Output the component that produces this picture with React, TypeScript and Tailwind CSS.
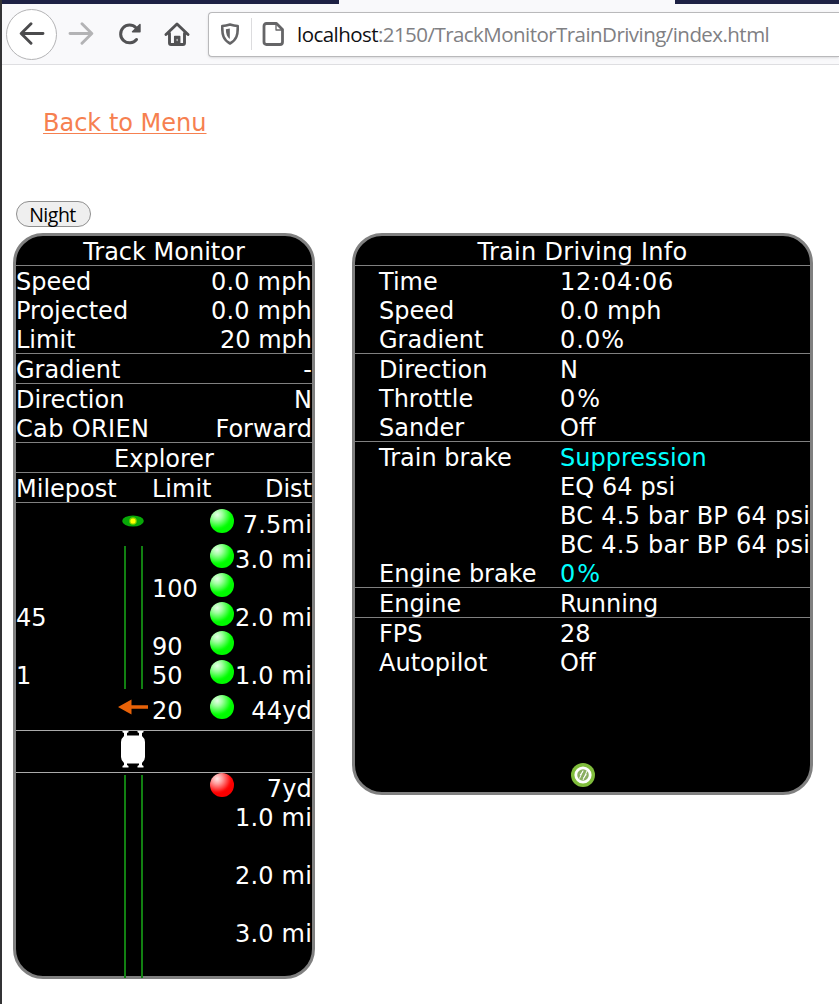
import React from "react";

type Signal = "green" | "red";

function Ball({ color }: { color: Signal }) {
  return (
    <svg className="block h-6 w-6" viewBox="0 0 24 24">
      <defs>
        <radialGradient id={"ball-" + color} cx="0.3" cy="0.24" r="0.62">
          <stop offset="0" stopColor={color === "green" ? "#e6ffe6" : "#ffe6e6"} />
          <stop offset="0.35" stopColor={color === "green" ? "#a0ffa0" : "#ff9c9c"} />
          <stop offset="0.9" stopColor={color === "green" ? "#0aff0a" : "#ff0a0a"} />
          <stop offset="1" stopColor={color === "green" ? "#00fb00" : "#fb0000"} />
        </radialGradient>
      </defs>
      <circle cx="12" cy="12" r="12" fill={"url(#ball-" + color + ")"} />
    </svg>
  );
}

function Title({ children, className }: { children: React.ReactNode; className?: string }) {
  return <div className={"h-[30px] border-b border-[#808080] text-center " + (className || "")}>{children}</div>;
}

function Pair({ label, value, line, labelClass, valueClass }: { label: string; value: string; line?: boolean; labelClass?: string; valueClass?: string }) {
  return (
    <div className={line ? "flex h-[30px] justify-between border-b border-[#808080]" : "flex h-[29px] justify-between"}>
      <span className={labelClass}>{label}</span>
      <span className={valueClass}>{value}</span>
    </div>
  );
}

function TrackRow({ post, limit, signal, dist, height }: { post?: string; limit?: string; signal?: Signal; dist?: string; height?: string }) {
  return (
    <div className={"grid grid-cols-[136px_58px_24px_78px] " + (height || "h-[29px]")}>
      <span>{post}</span>
      <span>{limit}</span>
      <span>{signal && <Ball color={signal} />}</span>
      <span className="-ml-1 flex justify-end whitespace-nowrap tracking-[0.2px]">{dist}</span>
    </div>
  );
}

function Info({ label, value, line, valueClass }: { label?: string; value: string; line?: boolean; valueClass?: string }) {
  return (
    <div className={"grid grid-cols-[181px_250px] pl-6 " + (line ? "h-[30px] border-b border-[#808080]" : "h-[29px]")}>
      <span>{label}</span>
      <span className={"whitespace-nowrap " + (valueClass || "")}>{value}</span>
    </div>
  );
}

function Rails({ size }: { size: string }) {
  return <div className={"w-[19px] border-x-2 border-[#128012] " + size} />;
}

function Browser() {
  return (
    <header className="h-[65px] border-b border-[#dedee1] bg-[#f9f9fb]">
      <div className="flex h-1 justify-between">
        <div className="w-[337px] bg-[#1d2144]" />
        <div className="w-[164px] bg-[#1d2144]" />
      </div>
      <div className="flex h-[60px] items-center">
        <div className="ml-1 flex h-[51px] w-[51px] items-center justify-center rounded-full border border-[#b4b4b6] bg-white">
          <svg width="26" height="24" viewBox="0 0 26 24" fill="none" stroke="#4b4b4d" strokeWidth="2.9" strokeLinecap="round" strokeLinejoin="round">
            <path d="M24 11.500H2.500M12 1.700L2.200 11.500l9.800 9.800" />
          </svg>
        </div>
        <svg className="ml-[11px]" width="26" height="24" viewBox="0 0 26 24" fill="none" stroke="#b3b3b5" strokeWidth="2.9" strokeLinecap="round" strokeLinejoin="round">
          <path d="M2 11.500h21.500M14 1.700l9.800 9.800-9.800 9.800" />
        </svg>
        <svg className="ml-[23px]" width="26" height="24" viewBox="0 0 26 24" fill="none" stroke="#525254" strokeWidth="3" strokeLinecap="round">
          <path d="M19.500 17.500A8.900 8.900 0 1 1 19 5.800" />
          <path d="M23 2.500v7.300H15.500z" fill="#525254" strokeWidth="1.400" strokeLinejoin="round" />
        </svg>
        <svg className="ml-[21px]" width="26" height="26" viewBox="0 0 26 26" fill="none" stroke="#525254" strokeWidth="2.900" strokeLinecap="round" strokeLinejoin="round">
          <path d="M2 13.500L13 3l11 10.500M5.500 12.500v9.500q0 1.500 1.500 1.500h12q1.500 0 1.500-1.500v-9.500" />
          <path d="M10.700 23V15.500h5V23" fill="#525254" strokeWidth="1.500" />
          <path d="M13.200 18.500v1" stroke="#b9b9bb" strokeWidth="1.500" />
        </svg>
        <div className="ml-[18px] flex h-[45px] flex-1 items-center rounded-l-sm border border-r-0 border-[#b9b9bb] bg-white shadow-sm">
          <svg className="ml-3" width="18" height="22" viewBox="0 0 18 22">
            <path d="M9 1.500Q13 2.700 16.700 3C17 11.500 15.700 17 9 20.500C2.300 17 1 11.500 1.300 3Q5 2.700 9 1.500z" fill="none" stroke="#656567" strokeWidth="2.600" strokeLinejoin="round" />
            <path d="M8.800 5.500v10.500C6 14 4.900 11 4.900 6.200z" fill="#656567" />
          </svg>
          <div className="ml-3 h-8 w-px bg-[#dcdcde]" />
          <svg className="ml-[10px]" width="22" height="24" viewBox="0 0 22 24" fill="none" stroke="#656567" strokeLinejoin="round">
            <path d="M4.500 1.500h10l6 6v12.500q0 2.500-2.500 2.500H4.500Q2 22.500 2 20V4q0-2.500 2.500-2.500z" strokeWidth="2.800" />
            <path d="M14 2v6h6" strokeWidth="1.300" />
          </svg>
          <span className="ml-[13px] whitespace-nowrap font-['Open_Sans','Noto_Sans',sans-serif] text-[20.500px] tracking-[-0.550px] text-[#808083]">
            <span className="text-[#101014]">localhost</span>:2150/TrackMonitorTrainDriving/index.html
          </span>
        </div>
      </div>
    </header>
  );
}

export default function App() {
  return (
    <div className="h-[1004px] w-[839px] overflow-hidden border-l-2 border-[#333335] bg-white font-['Verdana','DejaVu_Sans',sans-serif] text-[24px] leading-[33px]">
      <Browser />
      <a href="#menu" className="mt-[42px] ml-[41px] block h-[94px] w-fit text-[#f68050] underline decoration-1 underline-offset-[2px]">
        Back to Menu
      </a>
      <button className="ml-3.5 block h-[26px] w-[75px] rounded-full border border-[#8f8f8f] bg-[#efefef] pr-0.5 font-['Open_Sans','Noto_Sans',sans-serif] text-[19.5px] leading-[25px] tracking-[-0.500px] text-black">
        Night
      </button>
      <main className="mt-1.5 ml-[11px] flex items-start gap-[37px] text-white">
        <section className="h-[746px] w-[302px] rounded-[30px] border-[3px] border-[#808080] bg-black">
          <Title>Track Monitor</Title>
          <Pair label="Speed" value="0.0 mph" valueClass="tracking-[0.2px]" />
          <Pair label="Projected" value="0.0 mph" valueClass="tracking-[0.2px]" />
          <Pair label="Limit" value="20 mph" line />
          <Pair label="Gradient" value="-" line />
          <Pair label="Direction" value="N" />
          <Pair label="Cab ORIEN" value="Forward" line labelClass="tracking-[0.35px]" />
          <Title>Explorer</Title>
          <div className="grid h-[30px] grid-cols-[136px_82px_78px] border-b border-[#808080]">
            <span>Milepost</span>
            <span>Limit</span>
            <span className="flex justify-end">Dist</span>
          </div>
          <div className="relative h-[228px] border-b border-[#aaaaaa] pt-1.5">
            <TrackRow signal="green" dist="7.5mi" height="h-[35px]" />
            <TrackRow signal="green" dist="3.0 mi" />
            <TrackRow limit="100" signal="green" />
            <TrackRow post="45" signal="green" dist="2.0 mi" />
            <TrackRow limit="90" signal="green" />
            <TrackRow post="1" limit="50" signal="green" dist="1.0 mi" height="h-[35px]" />
            <TrackRow limit="20" signal="green" dist="44yd" />
            <div className="absolute top-0 left-[102px] flex h-[227px] w-[30px] flex-col items-center">
              <svg className="mt-3 block" width="22" height="12" viewBox="0 0 22 12">
                <ellipse cx="11" cy="6" rx="10.800" ry="5.500" fill="#08a808" />
                <circle cx="11" cy="6" r="3.800" fill="#7fd000" />
                <circle cx="11" cy="6" r="2.600" fill="#ffff00" />
              </svg>
              <div className="mt-[19px] ml-px"><Rails size="h-[143px]" /></div>
              <svg className="mt-2.5 block" width="30" height="16" viewBox="0 0 30 16">
                <path d="M0 8L13.500 .5v5.800H30v3.400H13.500v5.800z" fill="#e86208" />
              </svg>
            </div>
          </div>
          <div className="h-[42px] border-b border-[#aaaaaa] pl-[105px]">
            <svg className="block" width="24" height="37" viewBox="0 0 24 37" fill="#fff">
              <path d="M1.500 0H7.500V1.200L6 2V4.500H18V2L16.500 1.200V0H22.500V1.200L21 2V5Q24 7.500 24 11V26Q24 29.500 21 32V34L22.500 35V36.500H16.500V35L18 34V32.500H6V34L7.500 35V36.500H1.500V35L3 34V32Q0 29.500 0 26V11Q0 7.500 3 5V2L1.500 1.200Z" />
            </svg>
          </div>
          <div className="relative">
            <TrackRow signal="red" dist="7yd" />
            <TrackRow dist="1.0 mi" />
            <TrackRow />
            <TrackRow dist="2.0 mi" />
            <TrackRow />
            <TrackRow dist="3.0 mi" />
            <div className="absolute top-0.5 left-[108px]"><Rails size="h-[203px]" /></div>
          </div>
        </section>
        <section className="h-[562px] w-[461px] rounded-[30px] border-[3px] border-[#808080] bg-black">
          <Title className="tracking-[0.3px]">Train Driving Info</Title>
          <Info label="Time" value="12:04:06" valueClass="tracking-[0.8px]" />
          <Info label="Speed" value="0.0 mph" valueClass="tracking-[0.3px]" />
          <Info label="Gradient" value="0.0%" valueClass="tracking-[1px]" line />
          <Info label="Direction" value="N" />
          <Info label="Throttle" value="0%" valueClass="tracking-[2px]" />
          <Info label="Sander" value="Off" line />
          <Info label="Train brake" value="Suppression" valueClass="text-[#00ffff]" />
          <Info value="EQ 64 psi" valueClass="tracking-[0.1px]" />
          <Info value="BC 4.5 bar BP 64 psi" valueClass="tracking-[0.27px]" />
          <Info value="BC 4.5 bar BP 64 psi" valueClass="tracking-[0.27px]" />
          <Info label="Engine brake" value="0%" valueClass="tracking-[2px] text-[#00ffff]" line />
          <Info label="Engine" value="Running" line />
          <Info label="FPS" value="28" />
          <Info label="Autopilot" value="Off" />
          <svg className="mx-auto mt-[87px] block" width="24" height="24" viewBox="0 0 24 24">
            <circle cx="12" cy="12" r="12" fill="#80bd3c" />
            <circle cx="12" cy="12" r="7.200" fill="#8bae62" stroke="#fff" strokeWidth="2.800" />
            <path d="M8.500 15.500l3.500-8M12 17l4-9M9 12l3-3.500M12.500 15l3-3.500" stroke="#fff" strokeWidth="1" />
          </svg>
        </section>
      </main>
    </div>
  );
}
